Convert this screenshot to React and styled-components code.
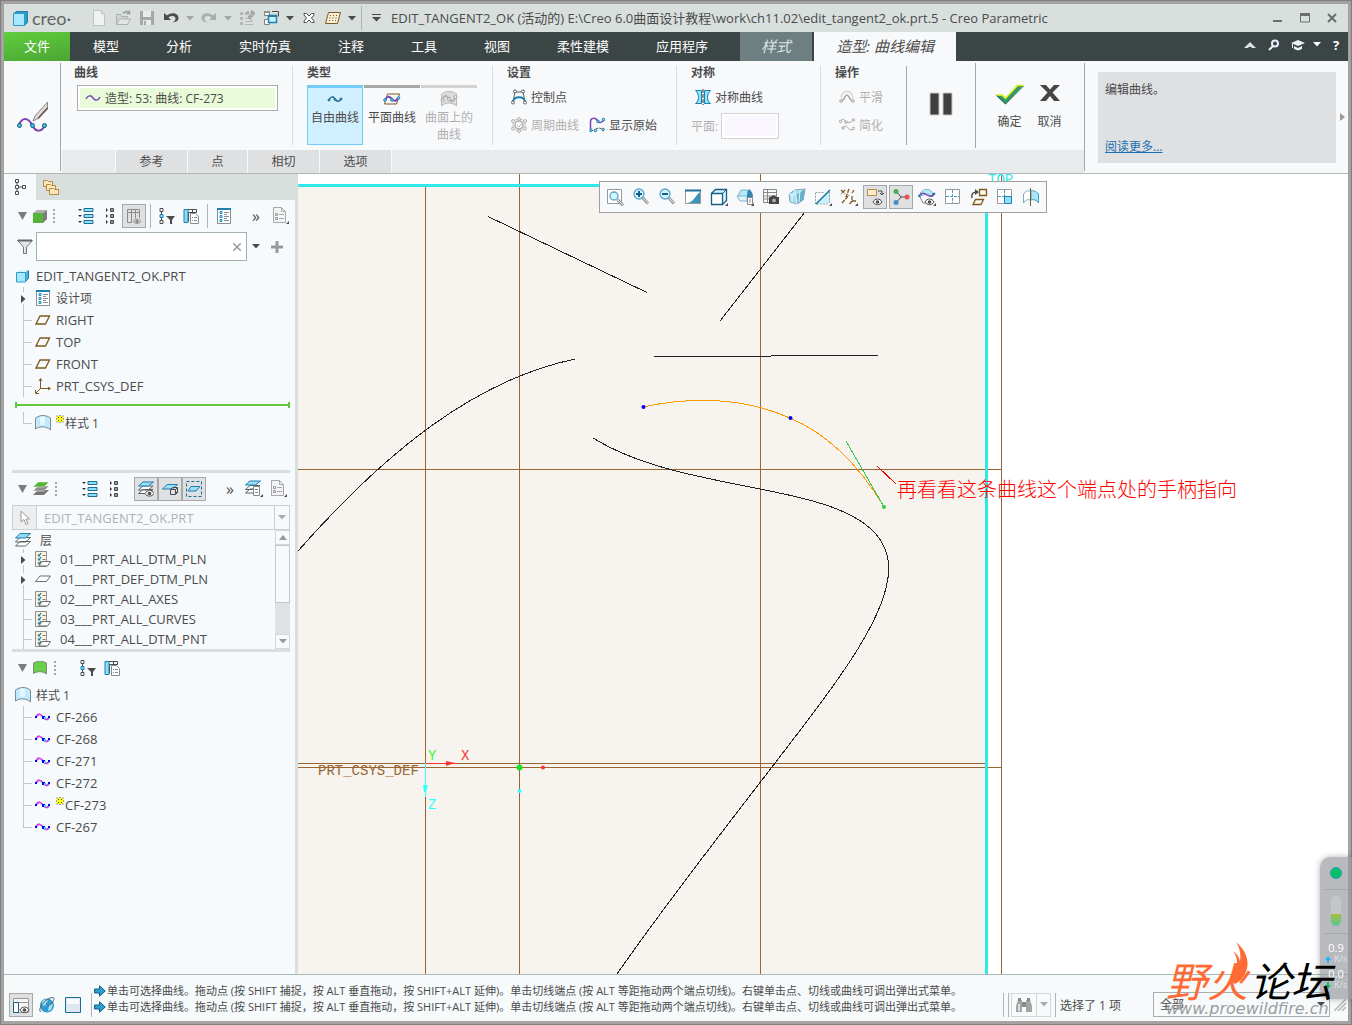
import React from 'react';
import styled, { createGlobalStyle, css } from 'styled-components';

const GlobalStyle = createGlobalStyle`
  * {
    box-sizing: border-box;
  }
  body {
    margin: 0;
    color: #4b4b4b;
    font-family: "Open Sans", "Noto Sans CJK SC", sans-serif;
    font-size: 12px;
  }
  button, input, select {
    color: inherit;
    font: inherit;
  }
  button {
    padding: 0;
    border: 0;
    background: none;
  }
  svg {
    display: block;
    flex: none;
  }
`;

/* ---------- icons ---------- */

const BLUE = '#1f7fae';
const DARK = '#4b4b4b';
const BROWN = '#7d5a1e';

const Svg = ({ w = 16, h = 16, children }) => (
  <svg width={w} height={h} viewBox={`0 0 ${w} ${h}`} fill="none" aria-hidden="true">
    {children}
  </svg>
);

const Caret = ({ color = DARK }) => (
  <Svg w={8} h={5}>
    <path d="M0 0h8L4 4.5z" fill={color} />
  </Svg>
);

const CubeIcon = () => (
  <Svg w={14} h={14}>
    <path d="M1.500 3.500l3-2h8v8l-3 3" fill="#4fb4e0" stroke="#1f7fae" />
    <path d="M.500 3.500h9v9.500h-9z" fill="#a5e8ff" stroke="#2e9cc9" />
    <path d="M1.500 3l2.500-2h8.500L10 3z" fill="#d6f5ff" />
  </Svg>
);

const LogoIcon = () => (
  <Svg w={15} h={15}>
    <path d="M1 2.500L3 .5h11.500v11l-3 3" fill="#2e9cc9" stroke="#1f7fae" />
    <path d="M.5 2.500h11v12h-11z" fill="#a5e8ff" stroke="#2e9cc9" />
  </Svg>
);

const NewIcon = () => (
  <Svg>
    <path d="M2.500.5h8l3 3.500v11.500h-11z" fill="#f1f3f2" stroke="#bfc3c2" />
    <path d="M10.500.5V4h3" stroke="#bfc3c2" />
  </Svg>
);

const OpenIcon = () => (
  <Svg>
    <path d="M1.500 14.500V4.500h4l1 2h6v3" fill="#d0d4d3" stroke="#adb1b0" />
    <path d="M1.500 14.500l3-5.500h11l-3 5.500z" fill="#e2e5e4" stroke="#adb1b0" />
    <path d="M8 3.500c1-2 4-2.500 6-1M14.500.5v3h-3" stroke="#9a9e9d" strokeWidth="1.500" />
  </Svg>
);

const SaveIcon = () => (
  <Svg>
    <path d="M1 1h14v14H1z" fill="#a5a8a7" />
    <path d="M4 1h8v6H4zM4 10h8v5H4z" fill="#e9ebea" />
    <path d="M5 11h2v4H5z" fill="#a5a8a7" />
  </Svg>
);

const UndoIcon = ({ color = DARK, flip }) => (
  <Svg>
    <g transform={flip ? 'translate(16 0) scale(-1 1)' : undefined}>
      <path d="M1 3v7h7L5.500 7.500C9 5 13 6 12.500 9c0 1.500-1.500 2.500-3 3.500 3-.3 6-1.500 6-4.500C15.500 3 8.500 1.500 4 5.500z" fill={color} />
    </g>
  </Svg>
);

const RegenIcon = () => (
  <Svg>
    <path d="M1 2h3v3H1zM1 7h3v3H1zM1 12h3v3H1z" fill="#b3b7b6" />
    <path d="M6 8.500h6M6 11.500h8M6 14.500h8" stroke="#b3b7b6" />
    <path d="M6 4.500c1-2 2-2 3-1.500M14 4c0 2-1 3-3 3M9 1v4M11.500 5v4l-2-2zM12 3l4 1-3-3z" stroke="#a2a6a5" strokeWidth="1.500" />
  </Svg>
);

const WindowsIcon = () => (
  <Svg>
    <path d="M1.500 1.500h5v4h-5zM1.500 9.500h5v5h-5z" fill="#fff" stroke="#7d8180" />
    <path d="M1 1h6v2H1z" fill="#8d9190" />
    <path d="M9 1.500h6.500v5" stroke="#4a4f4e" />
    <path d="M5.500 5.500h8v7h-8z" fill="#c8f0ff" stroke="#1f7fae" strokeWidth="1.500" />
    <path d="M5 5h9v2H5z" fill="#1f7fae" />
  </Svg>
);

const CloseWinIcon = () => (
  <Svg w={12} h={12}>
    <path d="M1 1.500h2.500L6 4l2.500-2.500H11V3L8.500 6 11 9v1.500H8.500L6 8l-2.500 2.500H1V9l2.500-3L1 3z" fill="#fff" stroke="#4a4f4e" />
  </Svg>
);

const PlaneDotsIcon = () => (
  <Svg>
    <path d="M3.500 2.500h12l-3 11h-12z" fill="#f6edd6" stroke={BROWN} />
    <path d="M5 5.500h9M4.500 8h9M4 10.500h9" stroke={BROWN} strokeDasharray="1 2" />
  </Svg>
);

const WaveIcon = () => (
  <Svg w={16} h={8}>
    <path d="M1 5C3 1 6 1 8 4s5 3 7-1" stroke="#7b4db8" strokeWidth="1.500" />
  </Svg>
);

const StyleCurveIcon = () => (
  <Svg w={34} h={32}>
    <path d="M3 24c3-8 9-8 13 0s10 7 13 0" stroke="#7b45b0" strokeWidth="2" />
    <path d="M31.500 1L19 15l-2 5 5-2.500L31.500 8z" fill="#dcdcdc" stroke="#8a8a8a" />
    <path d="M31.500 7L22 17.500" stroke="#6e5240" strokeWidth="1.500" />
    <g fill="#45c0e6" stroke="#14597c">
      <circle cx="3.500" cy="24.500" r="2" />
      <circle cx="16.500" cy="24.500" r="2" />
      <circle cx="28.500" cy="24.500" r="2" />
    </g>
  </Svg>
);

const FreeCurveIcon = () => (
  <Svg w={16} h={12}>
    <path d="M2 7c2-4 4-4 6-1s4 3 6 0" stroke="#1d6f97" strokeWidth="1.500" />
    <g fill="#8fe0ff" stroke="#14597c">
      <circle cx="2" cy="7" r="1" />
      <circle cx="8" cy="6.500" r="1" />
      <circle cx="14" cy="6" r="1" />
    </g>
  </Svg>
);

const PlanarCurveIcon = () => (
  <Svg w={18} h={12}>
    <path d="M4.500 1h12l-3 10h-12z" stroke={BROWN} />
    <path d="M2 7c2-4 4-4 7-1s4 2 6-1" stroke="#7b45b0" strokeWidth="2" />
    <g fill="#8fe0ff" stroke={BLUE}>
      <circle cx="2" cy="7" r="1.300" />
      <circle cx="9" cy="7" r="1.300" />
      <circle cx="15.500" cy="5" r="1.300" />
    </g>
  </Svg>
);

const SurfCurveIcon = () => (
  <Svg w={18} h={16}>
    <path d="M1.500 3C6-.5 12-.5 16.500 3v12c-4-4-11-4-15 0z" fill="#dcdcdc" stroke="#b9b9b9" />
    <path d="M2 9c3-6 5-5 7-1s5 2 7-2" stroke="#a9a9a9" strokeWidth="1.500" />
    <g fill="#eee" stroke="#a9a9a9">
      <circle cx="2.500" cy="9" r="1.500" />
      <circle cx="9" cy="8" r="1.500" />
      <circle cx="15.500" cy="6" r="1.500" />
    </g>
  </Svg>
);

const ControlPointsIcon = () => (
  <Svg>
    <path d="M2 13L4 3h8l2 10" stroke="#5a5f62" />
    <path d="M2 12c2-5 10-5 12 0" stroke={BLUE} strokeWidth="2" />
    <g fill="#fff" stroke="#5a5f62">
      <circle cx="2" cy="13.500" r="1.500" />
      <circle cx="4" cy="2.500" r="1.500" />
      <circle cx="12" cy="2.500" r="1.500" />
      <circle cx="14" cy="13.500" r="1.500" />
    </g>
  </Svg>
);

const PeriodicIcon = () => (
  <Svg>
    <circle cx="8" cy="8" r="4" stroke="#aaa" strokeWidth="1.500" />
    <path d="M8 1.500L14 4v7.500L8 14.500 2 11.500V4z" stroke="#c4c4c4" />
    <path d="M6 8l2 2 5-6" stroke="#b9b9b9" />
    <g fill="#eee" stroke="#b4b4b4">
      <circle cx="8" cy="14" r="1.500" />
      <circle cx="2" cy="11.500" r="1.500" />
      <circle cx="2" cy="4" r="1.500" />
      <circle cx="8" cy="2" r="1.500" />
      <circle cx="14" cy="4" r="1.500" />
      <circle cx="14" cy="11.500" r="1.500" />
    </g>
  </Svg>
);

const OriginalIcon = () => (
  <Svg>
    <path d="M1.500 12V4.500c0-4 5-4 7-1s4 2 6 0" stroke="#7b45b0" strokeWidth="1.500" />
    <path d="M2 13.500h3c2-3 6-3 9-1" stroke={DARK} strokeDasharray="2 1" />
    <g fill="#7fdcff" stroke={BLUE}>
      <circle cx="2" cy="13.500" r="1.300" />
      <circle cx="9" cy="4.500" r="1.300" />
      <circle cx="14.500" cy="2.500" r="1.300" />
      <circle cx="6.500" cy="13.500" r="1.300" />
      <circle cx="14" cy="12.500" r="1.300" />
    </g>
  </Svg>
);

const SymmetryIcon = () => (
  <Svg>
    <path d="M.5 1.500h6v13h-6c4-3 4-9 0-13zM15.500 1.500h-6v13h6c-4-3-4-9 0-13z" fill="#8fe4ff" stroke={BLUE} />
    <path d="M8 0v16" stroke="#333" strokeDasharray="4 1" />
  </Svg>
);

const SmoothIcon = () => (
  <Svg>
    <path d="M2 9C4 0 12 0 14 9" stroke="#d6d6d6" strokeWidth="1.500" />
    <path d="M2 12c3 0 4-6 6-6s3 6 6 6" stroke="#a3a3a3" strokeWidth="1.500" />
    <g fill="#fff" stroke="#a3a3a3">
      <circle cx="2" cy="12" r="1.300" />
      <circle cx="14" cy="12" r="1.300" />
    </g>
  </Svg>
);

const SimplifyIcon = () => (
  <Svg>
    <path d="M1 5c2-4 4-3 5-1s4 3 8-1M4 11c2-3 4-2 5 0s3 3 6 0" stroke="#a3a3a3" />
    <g fill="#fff" stroke="#a3a3a3">
      <circle cx="1.500" cy="4.500" r="1.200" />
      <circle cx="7" cy="5" r="1.200" />
      <circle cx="14.500" cy="3" r="1.200" />
      <circle cx="4" cy="11" r="1.200" />
      <circle cx="14.500" cy="11.500" r="1.200" />
    </g>
  </Svg>
);

const PauseIcon = () => (
  <Svg w={24} h={24}>
    <path d="M1 1h9v22H1zM14 1h9v22h-9z" fill="#3f3f3f" stroke="#c9c6c4" />
  </Svg>
);

const CheckIcon = () => (
  <Svg w={30} h={22}>
    <path d="M1.500 11.500h5l4 3.500L23 1.500h5L10.500 20z" fill="#2f9a68" />
    <path d="M1.500 11h5.500l3.500 3.500L22.500 1.500H28.500" stroke="#d5ee00" strokeWidth="1.500" />
    <path d="M1.500 11.500l9 8.500L28.500 2" stroke="#1d5a3e" />
  </Svg>
);

const CrossIcon = () => (
  <Svg w={20} h={18}>
    <path d="M0 1h6l4 4.500L14 1h6l-7.500 7.500L20 17h-6l-4-5-4 5H0l7.500-8.500z" fill="#454545" />
  </Svg>
);

const TreeIcon = () => (
  <Svg w={12} h={16}>
    <path d="M3 3v10M3 8h6" stroke={DARK} />
    <g fill="#fff" stroke={DARK}>
      <path d="M1.500.5h3v3h-3zM1.500 6.500h3v3h-3zM1.500 12.500h3v3h-3zM8.500 6.500h3v3h-3z" />
    </g>
  </Svg>
);

const FoldersIcon = () => (
  <Svg w={18}>
    <g fill="#fbe6bb" stroke="#b98b3d">
      <path d="M.5 1.500h4l1 1h4v5h-9z" />
      <path d="M3.500 5.500h4l1 1h4v5h-9z" />
      <path d="M6.500 9.500h4l1 1h4v5h-9z" />
    </g>
  </Svg>
);

const GreenCubeIcon = () => (
  <Svg w={14} h={14}>
    <path d="M0 4l4-3h10L10 4z" fill="#b0b0b0" />
    <path d="M10 4l4-3v9l-4 4z" fill="#7b7b7b" />
    <path d="M0 4h10v10H0z" fill="#53b435" />
  </Svg>
);

const DotsIcon = () => (
  <Svg w={2} h={14}>
    <path d="M0 0h2v2H0zM0 4h2v2H0zM0 8h2v2H0zM0 12h2v2H0z" fill="#a6a6a6" />
  </Svg>
);

const ExpandIcon = () => (
  <Svg w={16}>
    <path d="M6 .5h9v3H6zM6 6.500h9v3H6zM6 12.500h9v3H6z" fill="#8fe0ff" stroke="#1a6d94" />
    <path d="M0 1h4L2 3zM0 7h4L2 9zM0 13h4l-2 2z" fill="#333" />
  </Svg>
);

const CollapseIcon = () => (
  <Svg w={10}>
    <path d="M5.500.5h3v3h-3zM5.500 6.500h3v3h-3zM5.500 12.500h3v3h-3z" fill="#999" stroke={DARK} />
    <path d="M1 0l2 2-2 2zM1 6l2 2-2 2zM1 12l2 2-2 2z" fill="#333" />
  </Svg>
);

const ColumnsEyeIcon = () => (
  <Svg>
    <path d="M1.500 1.500h12v3h-12zM1.500 4.500v10h4v-10M5.500 1.500v13M9.500 1.500v9M13.500 4v6" stroke="#8c8c8c" />
    <path d="M7 13.500c2-3 6-3 8 0-2 2.500-6 2.500-8 0z" fill="#ccc" stroke="#9b9b9b" />
    <circle cx="11" cy="13.500" r="1.500" fill="#888" />
  </Svg>
);

const FilterTreeIcon = () => (
  <Svg>
    <path d="M2.500 3v10" stroke={DARK} />
    <path d="M1 .5h3v3H1zM1 12.500h3v3H1z" fill="#fff" stroke={DARK} />
    <path d="M1 6.500h3v3H1z" fill="#8fe0ff" stroke={BLUE} />
    <path d="M7 8h9l-3 4v4h-2v-4z" fill={DARK} />
  </Svg>
);

const ColumnsPageIcon = () => (
  <Svg>
    <path d="M1.500 1.500h12v3h-12zM5.500 4.500v9M9.500 1.500v4" stroke={DARK} />
    <path d="M1 1.500h4v13H1z" fill="#8fdcf7" stroke={BLUE} />
    <path d="M7.500 5.500h5l3 3v7h-8z" fill="#fff" stroke="#8a8a8a" />
    <path d="M9 9.500h1M11 9.500h3M9 12.500h1M11 12.500h3" stroke="#8a8a8a" />
  </Svg>
);

const DesignIcon = () => (
  <Svg w={14}>
    <path d="M.5 1h13v14.500H.5z" fill="#fff" stroke="#8d8d8d" />
    <path d="M0 1h14" stroke={BLUE} strokeWidth="2" />
    <path d="M3 3.500h2v2H3zM3 7.500h2v2H3zM3 11.500h2v2H3z" stroke="#1b8fc4" fill="#c9f0ff" />
    <path d="M7 4.500h5M7 8.500h5M7 12.500h5M7 6.500h3M7 10.500h3" stroke="#8d8d8d" />
  </Svg>
);

const PageIcon = () => (
  <Svg w={17} h={18}>
    <path d="M1.500.5h8l4 4v11h-12z" fill="#f3f4f5" stroke="#a9a9a9" />
    <path d="M9.500.5v4h4" stroke="#a9a9a9" />
    <path d="M3.500 6.500h2v2h-2zM3.500 10.500h2v2h-2z" stroke="#999" />
    <path d="M7 7.500h5M7 11.500h5" stroke="#aaa" />
    <path d="M14 17h3v-3z" fill={DARK} />
  </Svg>
);

const FunnelIcon = () => (
  <Svg>
    <path d="M.5 1.500h15l-6 6.500v6.500h-3V8z" fill="#e3e4e5" stroke="#757575" />
    <path d="M1 1.500h14" stroke="#666" strokeWidth="2" />
  </Svg>
);

const PlaneIcon = () => (
  <Svg w={16} h={10}>
    <path d="M5 1h9.500l-4 8H1z" stroke={BROWN} strokeWidth="1.300" />
  </Svg>
);

const CsysIcon = () => (
  <Svg>
    <path d="M5.500 1v9.500H15M5.500 10.500L1 15" stroke={BROWN} />
    <path d="M4 3l1.500-2.500L7 3M13 9l2.500 1.500L13 12M.5 12v3.500h3.500" stroke={BROWN} />
  </Svg>
);

const SheetIcon = () => (
  <Svg>
    <path d="M.5 3C5-.3 11-.3 15.500 3v12c-4-4-11-4-15-1z" fill="#bfeaff" stroke="#7d8b93" />
    <path d="M5 2c2-.6 4-.4 5 0v8c-2-.5-4-.4-5 0z" fill="#fff" opacity=".6" />
  </Svg>
);

const SparkIcon = () => (
  <Svg w={8} h={8}>
    <path d="M1 1h6v6H1z" fill="#ff0" />
    <path d="M.5.500h1v1h-1zM6.500.500h1v1h-1zM.5 6.500h1v1h-1zM6.500 6.500h1v1h-1zM3.500 0h1v1h-1zM3.500 7h1v1h-1zM0 3.500h1v1H0zM7 3.500h1v1H7zM2 2h1v1H2zM5 2h1v1H5zM2 5h1v1H2zM5 5h1v1H5z" fill="#444" />
  </Svg>
);

const LayersIcon = () => (
  <Svg>
    <path d="M5 9.500h10.500l-5 4.500H.5zM5 5.500h10.500l-5 4.500H.5z" fill="#fff" stroke="#5d6468" />
    <path d="M5 1.500h10.500l-5 4.500H.5z" fill="#8fdcf7" stroke={BLUE} />
  </Svg>
);

const GreenLayersIcon = () => (
  <Svg>
    <path d="M5 9h11l-5 5H0z" fill="#767676" />
    <path d="M5 5h11l-5 5H0z" fill="#8e8e8e" stroke="#fff" strokeWidth=".5" />
    <path d="M5 1h11l-5 5H0z" fill="#53b435" stroke="#fff" strokeWidth=".5" />
  </Svg>
);

const Eye = ({ x, y }) => (
  <g transform={`translate(${x} ${y})`}>
    <path d="M0 3c2-4 7-4 9 0-2 3.500-7 3.500-9 0z" fill="#fff" stroke={DARK} />
    <circle cx="4.500" cy="3" r="1.800" fill={DARK} />
  </g>
);

const LayersEyeIcon = () => (
  <Svg>
    <path d="M5 8.500h10l-5 4H.5zM5 5h10l-5 4H.5z" fill="#fff" stroke="#5d6468" />
    <path d="M5 1h10.500l-5 4H.5z" fill="#9be0f8" stroke={BLUE} />
    <Eye x={7} y={9.500} />
  </Svg>
);

const LayerBoxIcon = () => (
  <Svg>
    <path d="M5 3.500h10.500l-5 4.500H.5z" fill="#9be0f8" stroke={BLUE} />
    <path d="M8.500 8.500h5v5h-5zM10.500 6.500h5v5h-2M8.500 8.500l2-2M13.500 8.500l2-2M13.500 13.500l2-2" stroke={DARK} />
  </Svg>
);

const LayerDashIcon = () => (
  <Svg>
    <path d="M.5.500h15v15H.5z" stroke="#1a6d94" strokeDasharray="3 2" />
    <path d="M5 5.500h9l-4 4.500H2z" fill="#9be0f8" stroke={BLUE} />
  </Svg>
);

const LayersPageIcon = () => (
  <Svg w={18} h={18}>
    <path d="M5 9h10l-5 4H.5zM5 5.500h10l-5 4H.5z" fill="#fff" stroke="#5d6468" />
    <path d="M5 1h10.500l-5 4H.5z" fill="#9be0f8" stroke={BLUE} />
    <path d="M8.500 6.500h6v9h-6z" fill="#fff" stroke="#888" />
    <path d="M10 9.500h3M10 12.500h3" stroke="#888" />
    <path d="M15 17h3v-3z" fill={DARK} />
  </Svg>
);

const PointerIcon = () => (
  <Svg w={10} h={16}>
    <path d="M1 1v11l3-2.500 2 5 2-1-2-4.500h3.500z" fill="#fff" stroke="#999" />
  </Svg>
);

const CheckListIcon = () => (
  <Svg>
    <path d="M.5.500h11v15H.5z" fill="#fdf2dc" stroke="#8d8d8d" />
    <path d="M3 3.500l1 1.500 2-3M3 7.500L4 9l2-3M3 11.500L4 13l2-3" stroke="#1779a8" strokeWidth="1.300" />
    <path d="M7.500 4.500h3M7.500 8.500h3" stroke="#777" />
    <path d="M7 10.500h8.500l-3 4.500H4z" fill="#fff" stroke="#6d6d6d" />
  </Svg>
);

const GrayPlaneIcon = () => (
  <Svg w={16} h={8}>
    <path d="M5 1h10.500l-4 5.500H.5z" fill="#fff" stroke="#6d6d6d" />
  </Svg>
);

const CurveItemIcon = () => (
  <Svg w={16} h={8}>
    <path d="M1 4c2-4 5-3 7 0s4 3 6 1" stroke="#c64be0" strokeWidth="2" />
    <path d="M0 3h2v2H0zM7 3h3v3H7zM13 3h2v2h-2z" fill="#00f" />
    <path d="M9 4h2v2H9z" fill="#29e3f5" />
  </Svg>
);

const Lens = ({ children, x = 7, y = 6, r = 5 }) => (
  <g>
    <path d={`M${x + 3.5} ${y + 3.5}l5.500 6`} stroke="#9b9b9b" strokeWidth="3" />
    <path d={`M${x + 4} ${y + 4}l5 5`} stroke="#e3e3e3" />
    <circle cx={x} cy={y} r={r} fill="#d5f3ff" stroke="#5aa5c8" strokeWidth="1.300" />
    {children}
  </g>
);

const Corner = () => <path d="M15 18h3v-3z" fill={DARK} />;

const Quad = () => (
  <>
    <path d="M1.500 1.500h14v14h-14z" fill="#fff" stroke="#999" />
    <path d="M8.500 2v13M2 8.500h13" stroke="#4b9cc0" strokeDasharray="3 1" />
  </>
);

const viewTools = [
  ['重新调整', <><path d="M1.500 1.500h14v14h-14z" fill="#fff" stroke="#999" /><Lens x={8} y={8} r={4} /></>],
  ['放大', <Lens><path d="M4 6h6M7 3v6" stroke="#0f5f87" strokeWidth="2" /></Lens>],
  ['缩小', <Lens><path d="M4 6h6" stroke="#0f5f87" strokeWidth="2" /></Lens>],
  ['重画', <><path d="M1.500 2.500h15v13h-15z" fill="#fff" stroke="#999" /><path d="M16 4v11H3c7-1 7-6 13-11z" fill="#3a93ba" /><path d="M1 2.500h16" stroke="#1f6f96" strokeWidth="2" /></>],
  ['显示样式', <><path d="M1.500 5.500l4-4h11v11l-4 4" fill="#d6f5ff" stroke="#155f86" strokeWidth="1.300" /><path d="M1.500 5.500h11v11h-11z" fill="#fff" stroke="#155f86" strokeWidth="1.300" /><path d="M12.500 5.500l4-4" stroke="#155f86" /><Corner /></>],
  ['已保存方向', <><path d="M2 8l3-6h6l3 4v5H4z" fill="#b5e9fb" stroke="#7fb3ca" /><path d="M1 8h10v5H4z" fill="#dff6ff" stroke="#7fb3ca" /><path d="M13 1c3 2 4 5 4 8h-6c0-3 0-6 2-8z" fill="#3487b3" /><path d="M11.500 9.500h5v7h-5z" fill="#fff" stroke="#888" /><path d="M13 12h2M13 14h2" stroke="#888" /><Corner /></>],
  ['视图管理器', <><path d="M1.500 1.500h13v13h-13zM1 4.500h14M5.500 1.500v13M1 8h13M1 11h13" stroke="#888" /><path d="M7 9h2l1-1.500h3L14 9h3v7H7z" fill="#444" /><circle cx="12" cy="12.500" r="2" fill="#aaa" /></>],
  ['透视图', <><path d="M1 6l6-4 10-1-2 11-6 4-7-2z" fill="#a8dff4" stroke="#7fa9bb" /><path d="M8 7l9-6-2 11-6 4z" fill="#4b9cc0" opacity=".7" /><path d="M1 6l7 1 1 9M4 6.500V14M7 2v5M12 2l-1 12" stroke="#e3f6fd" /></>],
  ['截面', <><path d="M2 16L16 2v13z" fill="#c8effc" /><path d="M1.500 5V16M1.500 4.500h9M3 16h11M15.500 4v12" stroke="#8aa" strokeDasharray="2 1" /><path d="M2 16L16 2" stroke="#1f6f96" strokeWidth="1.500" /><Corner /></>],
  ['基准显示过滤器', <><path d="M1 2l4 4M5 2L1 6M9 1L6 9M2 15l7-8M12 8v5h5M12 13l-3 4M14 2l-2 3" stroke={BROWN} strokeWidth="1.300" strokeDasharray="4 1" /><Corner /></>],
  ['注释显示', <><path d="M1.500 1.500h9v6h-9z" fill="#fdeec9" stroke="#b58b45" /><path d="M12 3h4v4M16 7l-2-2M16 7l2-2" stroke={DARK} /><Eye x={7} y={11} /></>, true],
  ['旋转中心', <><path d="M4 3l5 6-5 6M9 9h6" stroke={DARK} /><circle cx="4" cy="3.500" r="2.500" fill="#48ad5a" /><circle cx="4" cy="14.500" r="2.500" fill="#3f8fd0" /><circle cx="15" cy="9" r="2.500" fill="#e0564e" /></>, true],
  ['曲线显示', <><path d="M2 5c4-5 11-5 14 2l-2 2C11 5 7 5 4 8z" fill="#b5e9fb" stroke="#7fb3ca" /><path d="M1 8c3-4 5-3 8-1s6 1 8-2" stroke="#7b45b0" strokeWidth="1.500" /><path d="M2 9l3 6h3" stroke="#888" /><circle cx="1.500" cy="8" r="1.300" fill={BLUE} /><circle cx="15.500" cy="6" r="1.300" fill={BLUE} /><Eye x={7} y={11} /><Corner /></>],
  ['四视图', <Quad />],
  ['活动平面方向', <><path d="M9.500 1.500h7v6h-7zM5.500 11.500h8l-2.500 5H3z" fill="#fffaf0" stroke={BROWN} strokeWidth="1.300" /><path d="M2 10c-1-4 1-6 5-6" stroke={DARK} strokeWidth="1.500" /><path d="M5 1l4 3-4 3z" fill={DARK} /></>],
  ['下一视图', <><Quad /><path d="M8.500 8.500h7v7h-7z" fill="#8fe0ff" stroke={BLUE} /></>],
  ['对称显示', <><path d="M8 3C6 2 3 4 1.500 6v9C3 12 6 11 8 12" fill="#fff" stroke="#8aa" /><path d="M9 3c3-1 6 1 7.500 3v9C15 12 11 11 9 12z" fill="#a8e6fb" stroke="#4d9fc0" /><path d="M8.500 0v18" stroke={BROWN} /></>],
];

const BrowserIcon = () => (
  <Svg w={18} h={18}>
    <path d="M1.500 2.500h15v14h-15z" fill="#f6f6f6" stroke="#999" />
    <path d="M1.500 6.500h15" stroke="#999" />
    <path d="M1.500 6.500h5v10h-5z" fill="#fff" stroke="#155f86" />
    <Eye x={8} y={11} />
  </Svg>
);

const GlobeIcon = () => (
  <Svg w={18} h={18}>
    <circle cx="9" cy="9.500" r="7" fill="#2f9bd0" />
    <path d="M4 6c2-3 5-3 6-1l-2 2-1 3-3-1zM11 9l4-1-2 6-3 1z" fill="#a9def5" />
    <path d="M2.500 16C-1 12 9 1 15 1.500c3 1-1 6-5 9" stroke="#5a6063" />
  </Svg>
);

const ScreenIcon = () => (
  <Svg w={16} h={16}>
    <path d="M.5.500h15v15H.5z" fill="#dfe8ee" stroke="#1a6d94" />
    <path d="M2 2h12v5H2z" fill="#f8fbfc" />
  </Svg>
);

const ArrowIcon = () => (
  <Svg w={12} h={12}>
    <path d="M.5 4h5V.8L11.300 6 5.500 11.200V8h-5z" fill="#2b9ccc" stroke="#155f86" />
  </Svg>
);

const BinocularsIcon = () => (
  <Svg w={18} h={16}>
    <path d="M3 3h4v12H1V9zM11 3h4l2 6v6h-6z" fill="#a5a5a5" />
    <path d="M7 5h4v5H7zM3 1h3v3H3zM12 1h3v3h-3z" fill="#8a8a8a" />
    <path d="M3 7h2v7H3z" fill="#ddd" />
  </Svg>
);

/* ---------- window frame and title ---------- */

const Window = styled.div`
  position: relative;
  display: flex;
  flex-direction: column;
  min-height: 100vh;
  border: 4px solid #a5a2a2;
  outline: 1px solid #7f7f7f;
  outline-offset: -1px;
  background: #f7fafc;
`;

const Row = styled.div`
  display: flex;
  align-items: center;
`;

const TitleBar = styled.header`
  display: flex;
  align-items: center;
  height: 28px;
  padding: 0 4px 0 9px;
  background: #d8dfdd;
`;

const Brand = styled.div`
  display: flex;
  align-items: center;
  gap: 4px;
  width: 74px;
  color: #5e6463;
  font-family: Lato, sans-serif;
  font-size: 18px;
  line-height: 20px;
`;

const Tool = styled.button`
  display: flex;
  align-items: center;
  justify-content: center;
  width: ${({ $narrow }) => ($narrow ? 14 : 24)}px;
  height: 24px;
  flex: none;

  ${({ $pressed }) =>
    $pressed &&
    css`
      border: 1px solid #a8a8ac;
      background: #dfe0e2;
    `}
`;

const TitleText = styled.h1`
  flex: 1;
  margin: 0 0 0 3px;
  font-size: 13px;
  font-weight: 400;
  line-height: 20px;
  white-space: nowrap;
`;

const Divider = styled.span`
  width: 1px;
  height: 24px;
  margin: 0 ${({ $tight }) => ($tight ? 2 : 4)}px;
  background: #b0b4b6;
`;

const WindowButtons = styled(Row)`
  gap: 3px;
`;

/* ---------- menu ---------- */

const MenuBar = styled.nav`
  display: flex;
  height: 29px;
  color: #fff;
  background: #3c4545;
  font-size: 13px;
`;

const MenuTab = styled.button`
  padding: 0 23px;
  margin-right: 1px;
  line-height: 29px;
`;

const FileTab = styled(MenuTab)`
  width: 66px;
  margin: 0;
  padding: 0;
  background: linear-gradient(170deg, #5fce3b, #4ba534);
`;

const StyleTab = styled(MenuTab)`
  width: 72px;
  margin: 0 2px 0 8px;
  padding: 0;
  color: #d8e2e2;
  background: #6d7f80;
  font-style: italic;
  font-size: 15px;
`;

const ActiveTab = styled(StyleTab)`
  width: 142px;
  margin: 0;
  color: ${DARK};
  background: #f8f9fb;
  font-size: 15px;
`;

const MenuTools = styled(Row)`
  margin-left: auto;
  padding-bottom: 4px;
`;

/* ---------- ribbon ---------- */

const Ribbon = styled.section`
  display: flex;
  height: 113px;
  border-bottom: 1px solid #b0b8b8;
  background: #f8f9fb;
`;

const RibbonBadge = styled.div`
  width: 57px;
  margin: 2px 0;
  padding: 38px 0 0 12px;
  border-right: 1px solid #a3a8ab;
`;

const RibbonMain = styled.div`
  display: flex;
  flex: 1;
  flex-direction: column;
  padding-left: 1px;
`;

const Groups = styled.div`
  display: flex;
  flex: 1;
`;

const Group = styled.div`
  width: ${({ $width }) => $width}px;
  margin: 5px 0;
  padding-left: ${({ $inset = 14 }) => $inset}px;
  border-right: 1px solid ${({ $strong }) => ($strong ? '#a3a8ab' : '#dcdee0')};
`;

const ActionGroup = styled.div`
  display: flex;
  flex: ${({ $grow }) => ($grow ? 1 : '0 0 69px')};
  justify-content: center;
  gap: 8px;
  margin: 2px 0;
  padding-top: 21px;
  border-right: 1px solid ${({ $grow }) => ($grow ? 'transparent' : '#a3a8ab')};
`;

const GroupTitle = styled.h2`
  margin: 0;
  font-size: 12px;
  font-weight: 700;
  line-height: 14px;
`;

const CurveField = styled.label`
  display: flex;
  align-items: center;
  width: 201px;
  height: 26px;
  margin: 5px 0 0 3px;
  padding-left: 7px;
  border: 1px solid #a9abad;
  background: #eafbd9;
  box-shadow: inset 0 0 0 2px #fff;

  input {
    width: 160px;
    padding: 0 0 0 4px;
    border: 0;
    background: none;
  }
`;

const TypeButtons = styled.div`
  display: flex;
  gap: 1px;
  margin-top: 5px;
`;

const TypeButton = styled.button`
  display: flex;
  flex-direction: column;
  align-items: center;
  width: 56px;
  height: 60px;
  border-top: 3px solid ${({ disabled }) => (disabled ? '#d3d3d3' : '#a8a8a8')};
  color: ${({ disabled }) => (disabled ? '#b0b0b0' : DARK)};
  line-height: 17px;

  ${({ $active }) =>
    $active &&
    css`
      border: 1px solid #6fcdf8;
      border-top-width: 3px;
      background: #d1f0ff;
    `}
`;

const TypeIcon = styled.span`
  display: flex;
  align-items: center;
  height: 21px;
`;

const Command = styled.button`
  display: flex;
  align-items: center;
  gap: 4px;
  height: 28px;
  padding-left: 4px;
  color: ${({ disabled }) => (disabled ? '#b0b0b0' : DARK)};
  white-space: nowrap;
`;

const CommandRow = styled(Row)`
  gap: 6px;
`;

const Commands = styled.div`
  padding-top: 3px;
`;

const PlaneField = styled.label`
  display: flex;
  align-items: center;
  gap: 3px;
  height: 30px;
  color: #b0b0b0;

  input {
    width: 58px;
    height: 26px;
    border: 1px solid #d3d3d3;
    background: #faf7ff;
    box-shadow: inset 0 0 0 2px #fff;
  }
`;

const BigButton = styled.button`
  display: flex;
  flex-direction: column;
  align-items: center;
  justify-content: space-between;
  width: 32px;
  height: 46px;
`;

const PauseButton = styled(BigButton)`
  padding-top: 8px;
`;

const SubTabs = styled.div`
  display: flex;
  gap: 1px;
  height: 24px;
  padding-left: 54px;
  background: #e9eaec;
`;

const SubTab = styled.button`
  width: ${({ $width = 71 }) => $width}px;
  background: #dfe0e2;
  box-shadow: -1px 0 #f8f9fb, 1px 0 #f8f9fb;
  line-height: 22px;
`;

const Help = styled.aside`
  display: flex;
  align-items: center;
  width: 264px;
  margin: 2px 0;
  border-left: 1px solid #a3a8ab;
`;

const HelpBox = styled.div`
  display: flex;
  flex: 1;
  flex-direction: column;
  justify-content: space-between;
  height: 91px;
  margin: 0 4px 0 13px;
  padding: 8px 7px;
  background: #dfe0e2;

  a {
    color: #1b6fae;
  }
`;

/* ---------- side panel ---------- */

const Body = styled.div`
  display: flex;
  flex: 1;
`;

const Side = styled.aside`
  display: flex;
  flex-direction: column;
  width: 294px;
  border-right: 3px solid #d8dfdd;
`;

const SideTabs = styled.div`
  display: flex;
  height: 26px;
  background: #d8dfdd;
`;

const SideTab = styled.button`
  display: flex;
  align-items: center;
  justify-content: center;
  width: 32px;
  background: ${({ $active }) => ($active ? '#f7fafc' : 'none')};
`;

const PanelTools = styled.div`
  display: flex;
  align-items: center;
  height: 32px;
  padding-left: 8px;
`;

const Slot = styled.span`
  display: flex;
  align-items: center;
  justify-content: center;
  width: ${({ $width }) => $width}px;
`;

const More = styled(Tool)`
  font-size: 16px;
  line-height: 20px;
`;

const SearchRow = styled.div`
  display: flex;
  align-items: center;
  gap: 2px;
  height: 29px;
  padding-left: 12px;
`;

const SearchBox = styled.div`
  display: flex;
  align-items: center;
  width: 211px;
  height: 29px;
  padding-right: 2px;
  border: 1px solid #a3b1ad;
  background: #fff;

  input {
    flex: 1;
    min-width: 0;
    border: 0;
    background: none;
  }
`;

const Tree = styled.ul`
  margin: 0;
  padding: ${({ $top = 0 }) => $top}px 0 0;
  list-style: none;
  font-size: 13px;
`;

const TreeItem = styled.li`
  display: flex;
  align-items: center;
  gap: ${({ $gap = 5 }) => $gap}px;
  height: ${({ $height = 22 }) => $height}px;
  padding-left: ${({ $root }) => ($root ? 11 : 15)}px;
  font-size: ${({ $cjk }) => ($cjk ? '12px' : 'inherit')};
  white-space: nowrap;
`;

const Branch = styled.span`
  display: flex;
  align-items: center;
  align-self: stretch;
  width: 16px;
  margin-right: -${({ $gap = 5 }) => $gap}px;
  background:
    linear-gradient(#c3c7c9, #c3c7c9) 4px 0 / 1px ${({ $last }) => ($last ? '50%' : '100%')} no-repeat,
    linear-gradient(#c3c7c9, #c3c7c9) 4px 50% / ${({ $open }) => ($open ? 0 : 9)}px 1px no-repeat;
`;

const Expander = styled.button`
  height: 12px;
  padding: 2px 0 0 2px;
  background: #f7fafc;
`;

const IconCell = styled.span`
  display: flex;
  justify-content: center;
  width: 16px;
`;

const Starred = styled.span`
  display: flex;
  gap: 1px;

  svg {
    margin-top: 1px;
  }
`;

const InsertLine = styled.div`
  height: 6px;
  margin: 5px 5px 4px 11px;
  border-right: 2px solid #62c63f;
  border-left: 2px solid #62c63f;
  background: linear-gradient(#62c63f, #62c63f) 0 50% / 100% 2px no-repeat;
`;

const Section = styled.section`
  margin: 0 5px 0 8px;
  border-top: 3px solid #d8dfdd;

  ${PanelTools} {
    padding-left: 0;
  }
`;

const ModelTree = styled.section`
  height: 296px;
`;

const Combo = styled.div`
  display: flex;
  height: 25px;
  border: 1px solid #cbcfd1;
  color: #aeb2b4;

  button {
    display: flex;
    align-items: center;
    justify-content: center;
    width: 24px;
    border-right: 1px solid #cbcfd1;
    background: #eceef0;
  }

  select {
    flex: 1;
    padding: 0 7px;
    border: 0;
    background: none;
    appearance: none;
    color: inherit;
    font-size: 13px;
    opacity: 1;
  }
`;

const ComboArrow = styled.span`
  display: flex;
  align-items: center;
  justify-content: center;
  width: 15px;
  border-left: 1px solid #cbcfd1;
`;

const LayerList = styled.div`
  display: flex;
  height: 119px;
  margin-left: -8px;
  overflow: hidden;

  ul {
    flex: 1;
  }
`;

const Scroller = styled.div`
  display: flex;
  flex-direction: column;
  width: 15px;
  background: #dfe1e3;

  button {
    display: flex;
    align-items: center;
    justify-content: center;
    height: 15px;
    border: 1px solid #d5d8da;
    background: #f7fafc;
  }
`;

const Thumb = styled.span`
  height: 58px;
  margin-bottom: auto;
  border: 1px solid #c3c7c9;
  background: #f8f9fb;
`;

/* ---------- graphics area ---------- */

const Canvas = styled.main`
  position: relative;
  flex: 1;
  min-width: 0;
  min-height: 800px;
  overflow: hidden;
  background: #fff;
`;

const Drawing = styled.svg`
  position: absolute;
  inset: 0;
  width: 100%;
  height: 100%;
  font-family: "Liberation Mono", monospace;
  font-size: 14px;
`;

const ViewToolbar = styled.div`
  position: absolute;
  top: 7px;
  left: 301px;
  display: flex;
  align-items: center;
  height: 32px;
  padding: 0 2px;
  border: 1px solid #a0a0a0;
  background: #f8f9fb;
`;

const ViewSlot = styled.span`
  display: flex;
  justify-content: center;
  width: 26px;
`;

/* ---------- status bar ---------- */

const StatusBar = styled.footer`
  display: flex;
  align-items: center;
  height: 47px;
  padding: 13px 2px 0 5px;
  border-top: 1px solid #a9b8b6;
  background: #f6fafb;
`;

const StatusTools = styled(Row)`
  gap: 2px;
  padding-right: 4px;
`;

const Messages = styled.div`
  flex: 1;
  margin-top: -11px;
  font-size: 11px;
  line-height: 16px;
`;

const Message = styled.p`
  display: flex;
  align-items: center;
  gap: 1px;
  margin: 0;
  white-space: nowrap;
`;

const FindBox = styled(Row)`
  height: 24px;
  border: 1px solid #d3d6d8;

  button + button {
    border-left: 1px solid #d3d6d8;
  }
`;

const Selected = styled.span`
  width: 93px;
`;

const FilterSelect = styled.label`
  display: flex;
  align-items: center;
  width: 177px;
  height: 25px;
  margin-right: 4px;
  padding-right: 4px;
  border: 1px solid #a9adaf;

  select {
    flex: 1;
    padding: 0 6px;
    border: 0;
    background: none;
    appearance: none;
  }
`;

/* ---------- overlays ---------- */

const Monitor = styled.div`
  position: absolute;
  right: -4px;
  bottom: 22px;
  display: flex;
  flex-direction: column;
  align-items: center;
  width: 32px;
  height: 142px;
  padding-top: 10px;
  border-radius: 10px 0 0 10px;
  color: #fff;
  background: rgba(150, 153, 158, 0.68);
  box-shadow: 0 0 6px rgba(0, 0, 0, 0.3);
  font-size: 11px;
  line-height: 13px;
`;

const Light = styled.span`
  width: 12px;
  height: 12px;
  border: 1px solid #2f9fc0;
  border-radius: 50%;
  background: #07bf66;
`;

const GaugeRow = styled.div`
  display: flex;
  justify-content: center;
  width: 24px;
  margin: 10px 0 7px;
  padding: 6px 0 7px;
  border-top: 1px solid #a3a8ab;
  border-bottom: 1px solid #a3a8ab;
`;

const Gauge = styled.span`
  width: 10px;
  height: 30px;
  border-radius: 5px;
  background: linear-gradient(#c4c6c8 60%, #a8bf3a 60%, #53c79d);
`;

const Rate = styled.span`
  display: flex;
  align-items: center;
  gap: 3px;
  margin-bottom: 3px;
  color: #dfe3e6;
  font-size: 9px;
  line-height: 10px;
`;

const Watermark = styled.div`
  position: absolute;
  right: 12px;
  bottom: 4px;
  width: 170px;
  font-style: italic;
  pointer-events: none;
`;

const WatermarkName = styled.div`
  display: flex;
  color: #000;
  font-size: 41px;
  font-weight: 400;
  line-height: 40px;

  span {
    color: #ff6b35;
    margin-right: 2px;
  }
`;

const WatermarkUrl = styled.div`
  color: #9a9d9f;
  font-family: "DejaVu Sans", sans-serif;
  font-size: 16px;
  line-height: 16px;
`;

const Flame = styled.svg`
  position: absolute;
  top: -19px;
  left: 63px;
`;

const planes = ['RIGHT', 'TOP', 'FRONT'];
const layers = [
  ['01___PRT_ALL_DTM_PLN', true],
  ['01___PRT_DEF_DTM_PLN', true, true],
  ['02___PRT_ALL_AXES'],
  ['03___PRT_ALL_CURVES'],
  ['04___PRT_ALL_DTM_PNT'],
];
const curves = ['CF-266', 'CF-268', 'CF-271', 'CF-272', 'CF-273', 'CF-267'];
const menus = ['模型', '分析', '实时仿真', '注释', '工具', '视图', '柔性建模', '应用程序'];
const hint =
  '单击可选择曲线。拖动点 (按 SHIFT 捕捉，按 ALT 垂直拖动，按 SHIFT+ALT 延伸)。单击切线端点 (按 ALT 等距拖动两个端点切线)。右键单击点、切线或曲线可调出弹出式菜单。';

const Title = () => (
  <TitleBar>
    <Brand>
      <LogoIcon />
      creo·
    </Brand>
    <Row>
      <Tool aria-label="新建"><NewIcon /></Tool>
      <Tool aria-label="打开"><OpenIcon /></Tool>
      <Tool aria-label="保存"><SaveIcon /></Tool>
      <Tool aria-label="撤消"><UndoIcon /></Tool>
      <Tool aria-label="撤消列表" $narrow><Caret color="#a2a6a5" /></Tool>
      <Tool aria-label="重做"><UndoIcon color="#a9adac" flip /></Tool>
      <Tool aria-label="重做列表" $narrow><Caret color="#a2a6a5" /></Tool>
      <Tool aria-label="重新生成"><RegenIcon /></Tool>
      <Tool aria-label="窗口"><WindowsIcon /></Tool>
      <Tool aria-label="窗口列表" $narrow><Caret /></Tool>
      <Tool aria-label="关闭窗口"><CloseWinIcon /></Tool>
      <Tool aria-label="平面显示"><PlaneDotsIcon /></Tool>
      <Tool aria-label="平面列表" $narrow><Caret /></Tool>
      <Divider $tight />
      <Tool aria-label="自定义">
        <Svg w={9} h={8}>
          <path d="M0 .5h9" stroke={DARK} />
          <path d="M0 3h9L4.500 7.500z" fill={DARK} />
        </Svg>
      </Tool>
    </Row>
    <TitleText>
      EDIT_TANGENT2_OK (活动的) E:\Creo 6.0曲面设计教程\work\ch11.02\edit_tangent2_ok.prt.5 - Creo Parametric
    </TitleText>
    <WindowButtons>
      <Tool aria-label="最小化">
        <Svg w={10} h={10}><path d="M0 8h9" stroke="#6a6e6d" strokeWidth="2" /></Svg>
      </Tool>
      <Tool aria-label="最大化">
        <Svg w={10} h={10}><path d="M.5 1h9v8h-9z" stroke="#6a6e6d" /><path d="M0 1.500h10" stroke="#6a6e6d" strokeWidth="3" /></Svg>
      </Tool>
      <Tool aria-label="关闭">
        <Svg w={10} h={10}><path d="M1 1l8 8M9 1L1 9" stroke="#6a6e6d" strokeWidth="2" /></Svg>
      </Tool>
    </WindowButtons>
  </TitleBar>
);

const Menu = () => (
  <MenuBar>
    <FileTab>文件</FileTab>
    {menus.map(name => (
      <MenuTab key={name}>{name}</MenuTab>
    ))}
    <StyleTab>样式</StyleTab>
    <ActiveTab>造型: 曲线编辑</ActiveTab>
    <MenuTools>
      <Tool aria-label="折叠">
        <Svg w={12} h={6}><path d="M0 6l6-6 6 6H8.500L6 4.500 3.500 6z" fill="#dfe3e3" /></Svg>
      </Tool>
      <Tool aria-label="搜索">
        <Svg w={12} h={12}><circle cx="7" cy="4.500" r="3" stroke="#eef" strokeWidth="2" /><path d="M5 7l-4 4" stroke="#eef" strokeWidth="2" /></Svg>
      </Tool>
      <Tool aria-label="学习">
        <Svg w={14} h={12}><path d="M0 4l7-3 7 3-7 3zM3 7l4 2 4-2v3l-4 1.500L3 10z" fill="#eef2f2" /><path d="M1.500 4.500V9" stroke="#eef2f2" /></Svg>
      </Tool>
      <Tool aria-label="学习列表" $narrow><Caret color="#fff" /></Tool>
      <Tool aria-label="帮助"><b>?</b></Tool>
    </MenuTools>
  </MenuBar>
);

const RibbonArea = () => (
  <Ribbon>
    <RibbonBadge><StyleCurveIcon /></RibbonBadge>
    <RibbonMain>
      <Groups>
        <Group $width={231} $inset={12}>
          <GroupTitle>曲线</GroupTitle>
          <CurveField>
            <WaveIcon />
            <input aria-label="曲线" readOnly value="造型: 53: 曲线: CF-273" />
          </CurveField>
        </Group>
        <Group $width={200}>
          <GroupTitle>类型</GroupTitle>
          <TypeButtons>
            <TypeButton $active><TypeIcon><FreeCurveIcon /></TypeIcon>自由曲线</TypeButton>
            <TypeButton><TypeIcon><PlanarCurveIcon /></TypeIcon>平面曲线</TypeButton>
            <TypeButton disabled><TypeIcon><SurfCurveIcon /></TypeIcon>曲面上的<br />曲线</TypeButton>
          </TypeButtons>
        </Group>
        <Group $width={184}>
          <GroupTitle>设置</GroupTitle>
          <Commands>
            <Command><ControlPointsIcon />控制点</Command>
            <CommandRow>
              <Command disabled><PeriodicIcon />周期曲线</Command>
              <Command><OriginalIcon />显示原始</Command>
            </CommandRow>
          </Commands>
        </Group>
        <Group $width={144}>
          <GroupTitle>对称</GroupTitle>
          <Commands>
            <Command><SymmetryIcon />对称曲线</Command>
            <PlaneField>平面:<input disabled /></PlaneField>
          </Commands>
        </Group>
        <Group $width={86} $strong>
          <GroupTitle>操作</GroupTitle>
          <Commands>
            <Command disabled><SmoothIcon />平滑</Command>
            <Command disabled><SimplifyIcon />简化</Command>
          </Commands>
        </Group>
        <ActionGroup>
          <PauseButton aria-label="暂停"><PauseIcon /></PauseButton>
        </ActionGroup>
        <ActionGroup $grow>
          <BigButton><CheckIcon />确定</BigButton>
          <BigButton><CrossIcon />取消</BigButton>
        </ActionGroup>
      </Groups>
      <SubTabs>
        <SubTab>参考</SubTab>
        <SubTab $width={59}>点</SubTab>
        <SubTab>相切</SubTab>
        <SubTab>选项</SubTab>
      </SubTabs>
    </RibbonMain>
    <Help>
      <HelpBox>
        <span>编辑曲线。</span>
        <a href="#help">阅读更多...</a>
      </HelpBox>
      <Svg w={8} h={10}><path d="M0 1l5 4-5 4z" fill="#999" /></Svg>
    </Help>
  </Ribbon>
);

const Triangle = () => (
  <Svg w={9} h={8}><path d="M0 0h9L4.500 8z" fill="#7c7c7c" /></Svg>
);

const Arrow = () => (
  <Svg w={5} h={8}><path d="M0 0l4.500 4L0 8z" fill={DARK} /></Svg>
);

const Sidebar = () => (
  <Side>
    <ModelTree>
      <SideTabs>
        <SideTab $active aria-label="模型树"><TreeIcon /></SideTab>
        <SideTab aria-label="文件夹"><FoldersIcon /></SideTab>
      </SideTabs>
      <PanelTools>
        <Slot $width={20}><Triangle /></Slot>
        <Slot $width={16}><GreenCubeIcon /></Slot>
        <Slot $width={12}><DotsIcon /></Slot>
        <Slot $width={14} />
        <Tool aria-label="全部展开"><ExpandIcon /></Tool>
        <Tool aria-label="全部折叠"><CollapseIcon /></Tool>
        <Tool aria-label="树列" $pressed><ColumnsEyeIcon /></Tool>
        <Divider />
        <Tool aria-label="树过滤器"><FilterTreeIcon /></Tool>
        <Tool aria-label="列设置"><ColumnsPageIcon /></Tool>
        <Divider />
        <Tool aria-label="设计项"><DesignIcon /></Tool>
        <Slot $width={8} />
        <More>»</More>
        <Tool aria-label="设置"><PageIcon /></Tool>
      </PanelTools>
      <SearchRow>
        <Slot $width={18}><FunnelIcon /></Slot>
        <SearchBox>
          <input aria-label="搜索模型树" />
          <Tool aria-label="清除" $narrow>
            <Svg w={8} h={8}><path d="M0 0l8 8M8 0L0 8" stroke="#999" strokeWidth="1.500" /></Svg>
          </Tool>
        </SearchBox>
        <Tool aria-label="搜索选项" $narrow><Caret /></Tool>
        <Tool aria-label="添加">
          <Svg w={12} h={12}><path d="M6 0v12M0 6h12" stroke="#999" strokeWidth="3" /></Svg>
        </Tool>
      </SearchRow>
      <Tree $top={4}>
        <TreeItem $root><IconCell><CubeIcon /></IconCell>EDIT_TANGENT2_OK.PRT</TreeItem>
        <TreeItem $cjk>
          <Branch $open><Expander aria-label="展开"><Arrow /></Expander></Branch>
          <IconCell><DesignIcon /></IconCell>设计项
        </TreeItem>
        {planes.map(name => (
          <TreeItem key={name}>
            <Branch /><IconCell><PlaneIcon /></IconCell>{name}
          </TreeItem>
        ))}
        <TreeItem><Branch /><IconCell><CsysIcon /></IconCell>PRT_CSYS_DEF</TreeItem>
      </Tree>
      <InsertLine />
      <Tree>
        <TreeItem $cjk>
          <Branch $last /><IconCell><SheetIcon /></IconCell>
          <Starred><SparkIcon />样式 1</Starred>
        </TreeItem>
      </Tree>
    </ModelTree>
    <Section>
      <PanelTools>
        <Slot $width={20}><Triangle /></Slot>
        <Slot $width={18}><GreenLayersIcon /></Slot>
        <Slot $width={12}><DotsIcon /></Slot>
        <Slot $width={16} />
        <Tool aria-label="全部展开"><ExpandIcon /></Tool>
        <Tool aria-label="全部折叠"><CollapseIcon /></Tool>
        <Slot $width={8}><Divider /></Slot>
        <Tool aria-label="显示层" $pressed><LayersEyeIcon /></Tool>
        <Tool aria-label="层模型" $pressed><LayerBoxIcon /></Tool>
        <Tool aria-label="隔离层" $pressed><LayerDashIcon /></Tool>
        <Slot $width={12} />
        <More>»</More>
        <Tool aria-label="层操作"><LayersPageIcon /></Tool>
        <Tool aria-label="设置"><PageIcon /></Tool>
      </PanelTools>
      <Combo>
        <button aria-label="选择"><PointerIcon /></button>
        <select aria-label="活动模型" disabled>
          <option>EDIT_TANGENT2_OK.PRT</option>
        </select>
        <ComboArrow><Caret color="#aaa" /></ComboArrow>
      </Combo>
      <LayerList>
        <Tree>
          <TreeItem $root $height={19} $gap={9} $cjk><IconCell><LayersIcon /></IconCell>层</TreeItem>
          {layers.map(([name, open, flat]) => (
            <TreeItem key={name} $height={20} $gap={9}>
              <Branch $open={open} $gap={9}>
                {open && <Expander aria-label="展开"><Arrow /></Expander>}
              </Branch>
              <IconCell>{flat ? <GrayPlaneIcon /> : <CheckListIcon />}</IconCell>
              {name}
            </TreeItem>
          ))}
        </Tree>
        <Scroller>
          <button aria-label="向上"><Svg w={8} h={5}><path d="M0 5h8L4 0z" fill="#999" /></Svg></button>
          <Thumb />
          <button aria-label="向下"><Caret color="#999" /></button>
        </Scroller>
      </LayerList>
    </Section>
    <Section>
      <PanelTools>
        <Slot $width={20}><Triangle /></Slot>
        <Slot $width={16}>
          <Svg w={14} h={14}>
            <path d="M.5 2C5-.5 9-.5 13.500 2v11c-4-3-9-3-13-.5z" fill="#68cf49" stroke="#7d8b7d" />
          </Svg>
        </Slot>
        <Slot $width={14}><DotsIcon /></Slot>
        <Slot $width={14} />
        <Tool aria-label="树过滤器"><FilterTreeIcon /></Tool>
        <Tool aria-label="列设置"><ColumnsPageIcon /></Tool>
      </PanelTools>
    </Section>
    <Tree>
      <TreeItem $root $cjk><IconCell><SheetIcon /></IconCell>样式 1</TreeItem>
      {curves.map((name, i) => (
        <TreeItem key={name}>
          <Branch $last={i === curves.length - 1} />
          <IconCell><CurveItemIcon /></IconCell>
          {name === 'CF-273' ? <Starred><SparkIcon />{name}</Starred> : name}
        </TreeItem>
      ))}
    </Tree>
  </Side>
);

const Graphics = () => (
  <Canvas>
    <Drawing>
      <g transform="translate(-298 -174)" fill="none" shapeRendering="crispEdges">
        <path d="M298 187h687v2000H298z" fill="#f7f3ee" />
        <path d="M425.500 187v2000M519.500 174v2000M760.500 174v2000M1001.500 174v2000M298 469.500h704M298 763.500h687M298 767.500h704" stroke="#996633" />
        <path d="M298 185.500h688.500v2000" stroke="#2fe8e8" strokeWidth="3" />
        <g stroke="#222">
          <path d="M488 216.500l159 76M720 321l85-109M654 356.500h117M771 355.500h107" />
          <path d="M298 551C388 449 476 380 575 359" />
          <path d="M593 438C640 467 700 477 760 489S884 515 888.500 563C893 612 835 685 772 767 722 832 665 905 617 974" />
        </g>
        <path d="M643 407C693 396 745 398 790 418 832 436 862 470 884 507" stroke="#ff9900" />
        <path d="M846 441l38 66" stroke="#33cc4d" />
        <path d="M877 466l19 18" stroke="#e60000" />
        <path d="M425.500 763v34" stroke="#33ffff" />
        <path d="M426 763.500h32" stroke="#ff3333" />
      </g>
      <g transform="translate(-298 -174)">
        <circle cx="643.500" cy="407" r="2" fill="#00f" />
        <circle cx="790.500" cy="418" r="2" fill="#00f" />
        <circle cx="884" cy="507" r="2" fill="#33cc4d" />
        <circle cx="519.500" cy="767.500" r="3" fill="#1be01b" />
        <circle cx="543" cy="767.500" r="2" fill="#f33" />
        <circle cx="519.500" cy="791" r="2" fill="#3ff" />
        <path d="M446 761l9 2-9 3z" fill="#f33" />
        <path d="M423 785h5l-2 7h-2z" fill="#3ff" />
        <text x="318" y="775" fill="#996633">PRT_CSYS_DEF</text>
        <text x="428" y="760" fill="#33ff33">Y</text>
        <text x="461" y="760" fill="#ff3333">X</text>
        <text x="428" y="809" fill="#33ffff">Z</text>
        <text x="988" y="184" fill="#2fe8e8">TOP</text>
        <text x="897" y="497" fill="#ff0000" fontSize="20" fontWeight="300" fontFamily="'Noto Sans CJK SC', sans-serif">
          再看看这条曲线这个端点处的手柄指向
        </text>
      </g>
    </Drawing>
    <ViewToolbar>
      {viewTools.map(([name, icon, pressed]) => (
        <ViewSlot key={name}>
          <Tool aria-label={name} $pressed={pressed}>
            <Svg w={18} h={18}>{icon}</Svg>
          </Tool>
        </ViewSlot>
      ))}
    </ViewToolbar>
  </Canvas>
);

const Status = () => (
  <StatusBar>
    <StatusTools>
      <Tool aria-label="导航器" $pressed><BrowserIcon /></Tool>
      <Tool aria-label="浏览器"><GlobeIcon /></Tool>
      <Tool aria-label="全屏"><ScreenIcon /></Tool>
    </StatusTools>
    <Divider $tight />
    <Messages>
      <Message><ArrowIcon />{hint}</Message>
      <Message><ArrowIcon />{hint}</Message>
    </Messages>
    <Divider $tight />
    <Divider $tight />
    <FindBox>
      <Tool aria-label="查找"><BinocularsIcon /></Tool>
      <Tool aria-label="查找列表" $narrow><Caret color="#aaa" /></Tool>
    </FindBox>
    <Divider />
    <Selected>选择了 1 项</Selected>
    <FilterSelect>
      <select aria-label="选择过滤器">
        <option>全部</option>
      </select>
      <Caret />
    </FilterSelect>
    <Svg w={12} h={12}><path d="M0 12L12 0M4 12l8-8M8 12l4-4" stroke="#b5b5b5" strokeWidth="1.500" /></Svg>
  </StatusBar>
);

const App = () => (
  <Window>
    <GlobalStyle />
    <Title />
    <Menu />
    <RibbonArea />
    <Body>
      <Sidebar />
      <Graphics />
    </Body>
    <Status />
    <Monitor>
      <Light />
      <GaugeRow><Gauge /></GaugeRow>
      <span>0.9</span>
      <Rate>
        <Svg w={6} h={7}><path d="M3 0l3 4H4v3H2V4H0z" fill="#1fb0ff" /></Svg>
        K/s
      </Rate>
      <span>0.0</span>
      <Rate>
        <Svg w={6} h={7}><path d="M3 7l3-4H4V0H2v3H0z" fill="#07bf66" /></Svg>
        K/s
      </Rate>
    </Monitor>
    <Watermark>
      <WatermarkName><span>野火</span>论坛</WatermarkName>
      <WatermarkUrl>www.proewildfire.cn</WatermarkUrl>
      <Flame width="20" height="42" viewBox="0 0 20 42" aria-hidden="true">
        <path d="M7 0c12 10 14 22 9 32-3 6-7 8-10 10-6-4-3-10 0-14 3-6 3-12-2-19 4 3 6 6 7 10 1-7 0-13-4-19z" fill="#ff6b35" />
      </Flame>
    </Watermark>
  </Window>
);

export default App;
